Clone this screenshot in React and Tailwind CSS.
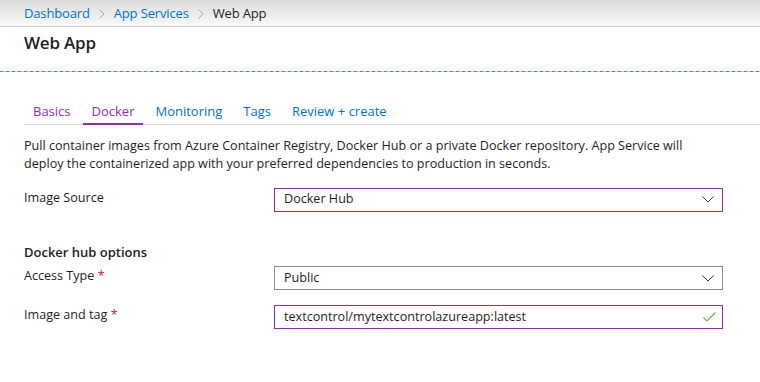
import React from "react";

const ff = { fontFamily: "'Open Sans', 'Noto Sans', sans-serif" };

function Chevron() {
  return (
    <svg width="12" height="7" viewBox="0 0 12 7" fill="none">
      <path d="M0.5 0.5 L6 6 L11.5 0.5" stroke="#333" strokeWidth="1" />
    </svg>
  );
}

function Check() {
  return (
    <svg width="13" height="10" viewBox="0 0 13 10" fill="none">
      <path d="M0.5 5.5 L4 9 L12.5 0.5" stroke="#6bb33f" strokeWidth="1.2" />
    </svg>
  );
}

function Sep() {
  return (
    <svg width="6" height="10" viewBox="0 0 6 10" fill="none" className="mx-[9px]">
      <path d="M0.5 0.5 L5 5 L0.5 9.5" stroke="#a6a6a6" strokeWidth="1" />
    </svg>
  );
}

export default function App() {
  const tabs = ["Basics", "Docker", "Monitoring", "Tags", "Review + create"];

  return (
    <div className="w-[760px] h-[382px] bg-white overflow-hidden text-[#1e1e1e]" style={ff}>
      {/* BREADCRUMB */}
      <div className="h-[27px] bg-gradient-to-b from-[#dcdcdc] to-[#f9f9f9] border-b border-[#cfcfcf] flex items-center pl-[24px] pt-[1px] text-[13px] tracking-[-0.15px]">
        <span className="text-[#0072c6]">Dashboard</span>
        <Sep />
        <span className="text-[#0072c6]">App Services</span>
        <Sep />
        <span className="text-[#1e1e1e]">Web App</span>
      </div>

      {/* TITLE */}
      <div className="pl-[24px] pt-[3px] h-[44px] text-[17px] font-semibold tracking-[-0.2px]">Web App</div>

      {/* DASHED */}
      <div className="h-[1px] w-full" style={{ backgroundImage: "repeating-linear-gradient(90deg,#1aa0c8 0 3px,#c8c8c8 3px 6px)" }} />

      {/* TABS */}
      <div className="ml-[24px] mt-[30px] flex gap-[3px] border-b border-[#d6d6d6] text-[13px]">
        {tabs.map((t, i) => (
          <div
            key={t}
            className={`px-[9px] ${i === 1 ? "border-b-2 border-[#8b2fa8] mb-[-1px] pb-[1px]" : "pb-[2px]"} ${
              i < 2 ? "text-[#8b2fa8]" : "text-[#0072c6]"
            }`}
          >
            {t}
          </div>
        ))}
      </div>

      {/* BODY */}
      <div className="pl-[24px] pr-[20px] pt-[12px] text-[12.6px]">
        <p className="leading-[18px]">
          Pull container images from Azure Container Registry, Docker Hub or a private Docker repository. App Service will
          <br />
          deploy the containerized app with your preferred dependencies to production in seconds.
        </p>

        <div className="flex mt-[15px]">
          <div className="w-[250px] pt-[1px]">Image Source</div>
          <div className="w-[449px] h-[24px] border border-[#8b2fa8] flex items-center justify-between pl-[9px] pr-[8px]">
            <span>Docker Hub</span>
            <Chevron />
          </div>
        </div>

        <div className="mt-[31px] text-[13px] font-semibold">Docker hub options</div>

        <div className="flex mt-[4px]">
          <div className="w-[250px] pt-[1px]">
            Access Type <span className="text-[#c4262e]">*</span>
          </div>
          <div className="w-[449px] h-[24px] border border-[#8a8a8a] flex items-center justify-between pl-[9px] pr-[8px]">
            <span>Public</span>
            <Chevron />
          </div>
        </div>

        <div className="flex mt-[15px]">
          <div className="w-[250px] pt-[1px]">
            Image and tag <span className="text-[#c4262e]">*</span>
          </div>
          <div className="w-[449px] h-[24px] border border-[#8b2fa8] flex items-center justify-between pl-[9px] pr-[6px]">
            <span>textcontrol/mytextcontrolazureapp:latest</span>
            <Check />
          </div>
        </div>
      </div>
    </div>
  );
}
